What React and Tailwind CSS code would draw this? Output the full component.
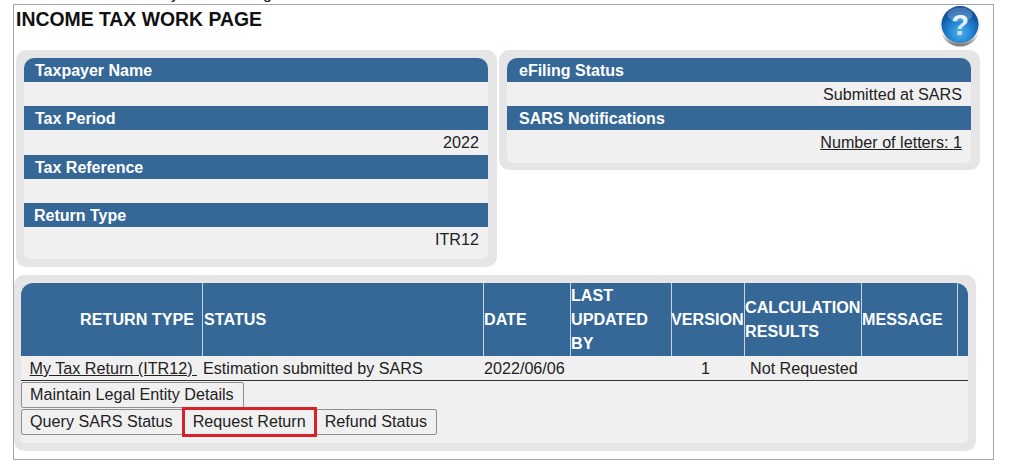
import React from 'react';

const font = 'font-["Liberation_Sans",Arial,sans-serif]';

const Field = ({ label, value, first, labelPad = 'pl-[11px]', h = 'h-[24px]' }) => (
  <>
    <div className={`h-[24px] bg-[#356897] text-white font-bold text-[16px] leading-[25px] ${labelPad} ${first ? 'rounded-t-[10px]' : ''}`}>
      {label}
    </div>
    <div className={`${h} text-right pr-[9px] text-[16.15px] leading-[24px] text-[#222]`}>{value}</div>
  </>
);

const HelpIcon = () => (
  <svg width="42" height="42" viewBox="0 0 42 42" className="block">
    <defs>
      <radialGradient id="ball" cx="50%" cy="72%" r="62%">
        <stop offset="0%" stopColor="#4db4ee" />
        <stop offset="55%" stopColor="#1f7fce" />
        <stop offset="100%" stopColor="#0c4f9c" />
      </radialGradient>
      <linearGradient id="rim" x1="0" y1="0" x2="0" y2="1">
        <stop offset="0%" stopColor="#d9dde2" />
        <stop offset="70%" stopColor="#f2f2f2" />
        <stop offset="100%" stopColor="#6e6e6e" />
      </linearGradient>
      <linearGradient id="mark" x1="0" y1="0" x2="0" y2="1">
        <stop offset="0%" stopColor="#ffffff" />
        <stop offset="100%" stopColor="#b9d9f2" />
      </linearGradient>
    </defs>
    <circle cx="21" cy="21.5" r="20" fill="url(#rim)" />
    <circle cx="21" cy="19.5" r="18.5" fill="url(#ball)" />
    <ellipse cx="21" cy="9.5" rx="12.5" ry="7" fill="#ffffff" opacity="0.22" />
    <text x="21" y="30" textAnchor="middle" fontSize="29" fontWeight="700" fill="url(#mark)" fontFamily="Liberation Sans, Arial, sans-serif">?</text>
  </svg>
);

const columns = [
  { label: 'RETURN TYPE', w: 'w-[182px]', cls: 'justify-end pr-[8px]' },
  { label: 'STATUS', w: 'w-[281px]', cls: 'pl-[1px]' },
  { label: 'DATE', w: 'w-[87px]', cls: '' },
  { label: <>LAST<br />UPDATED<br />BY</>, w: 'w-[101px]', cls: '' },
  { label: 'VERSION', w: 'w-[73px]', cls: 'overflow-visible' },
  { label: <>CALCULATION<br />RESULTS</>, w: 'w-[117px]', cls: '' },
  { label: 'MESSAGE', w: 'w-[96px]', cls: '' },
  { label: '', w: 'w-[10px]', cls: '' },
];

const rowCells = [
  { text: <a className="underline">My Tax Return (ITR12)&nbsp;</a>, w: 'w-[182px]', cls: 'text-right pr-[6px]' },
  { text: 'Estimation submitted by SARS', w: 'w-[281px]', cls: '' },
  { text: '2022/06/06', w: 'w-[87px]', cls: '' },
  { text: '', w: 'w-[101px]', cls: '' },
  { text: '1', w: 'w-[73px]', cls: 'text-center pr-[6px]' },
  { text: 'Not Requested', w: 'w-[117px]', cls: 'pl-[5px]' },
  { text: '', w: 'w-[96px]', cls: '' },
  { text: '', w: 'w-[10px]', cls: '' },
];

const Btn = ({ children, className = 'pl-[8px] pr-[9px]' }) => (
  <button className={`h-[26px] pb-[2px] bg-[#f0f0f0] border border-[#8f8f8f] rounded-[2px] text-[16.15px] leading-[22px] text-[#222] whitespace-nowrap ${className}`}>
    {children}
  </button>
);

export default function App() {
  return (
    <div className={`w-[1024px] h-[474px] bg-white overflow-hidden relative pt-[4px] pl-[13px] ${font}`}>
      {/* tail ends of the line cut off above the page */}
      <div className="absolute top-0 left-0 h-[3px] overflow-hidden text-[16px] leading-[16px] text-[#111]">
        <div className="mt-[-14px] flex pl-[171px]">
          <span>y</span>
          <span className="ml-[84px]">g</span>
        </div>
      </div>

      <div className="w-[981px] h-[456px] border border-[#a6a6a6] pl-[2px]">
        {/* Title row */}
        <div className="h-[45px] flex items-start justify-between pr-[12px]">
          <h1 className="text-[19.4px] leading-[29px] font-bold text-[#111]">INCOME TAX WORK PAGE</h1>
          <HelpIcon />
        </div>

        {/* Info panels */}
        <div className="flex items-start gap-[2px]">
          <div className="w-[481px] bg-[#e5e5e5] rounded-[10px] pl-[8px] pr-[9px] py-[8px]">
            <div className="bg-[#f0f0f0] rounded-b-[6px] rounded-t-[10px] h-[201px]">
              <Field first label="Taxpayer Name" value="" />
              <Field label="Tax Period" value="2022" h="h-[25px]" />
              <Field label="Tax Reference" value="" />
              <Field label="Return Type" value="ITR12" labelPad="pl-[10px]" />
            </div>
          </div>
          <div className="w-[481px] bg-[#e5e5e5] rounded-[10px] pl-[8px] pr-[9px] pt-[8px] h-[120px]">
            <div className="bg-[#f0f0f0] rounded-b-[6px] rounded-t-[10px] h-[105px]">
              <Field first label="eFiling Status" value="Submitted at SARS" labelPad="pl-[12px]" />
              <Field label="SARS Notifications" value={<a className="underline">Number of letters: 1</a>} labelPad="pl-[12px]" />
            </div>
          </div>
        </div>

        {/* Returns table */}
        <div className="mt-[8px] ml-[-2px] w-[962px] h-[176px] bg-[#e5e5e5] rounded-[10px] pl-[7px] pr-[8px] py-[8px]">
          <div className="bg-[#f0f0f0] h-[160px] rounded-t-[12px] rounded-b-[4px]">
            <div className="flex h-[73px] rounded-t-[12px] overflow-hidden bg-[#356897] text-white font-bold text-[16.15px] leading-[24px]">
              {columns.map((c, i) => (
                <div key={i} className={`${c.w} ${c.cls} pb-[2px] shrink-0 flex items-center whitespace-nowrap ${i < 7 ? 'border-r border-[#c9d6e2]' : ''}`}>
                  <div className={c.label === 'VERSION' ? 'ml-[-1px]' : ''}>{c.label}</div>
                </div>
              ))}
            </div>
            <div className="flex h-[25px] border-b border-[#333] text-[16.15px] leading-[24px] text-[#222]">
              {rowCells.map((c, i) => (
                <div key={i} className={`${c.w} ${c.cls} shrink-0 whitespace-nowrap`}>{c.text}</div>
              ))}
            </div>
            <div className="flex flex-col items-start pt-[1px] gap-[1px]">
              <Btn>Maintain Legal Entity Details</Btn>
              <div className="flex items-center">
                <Btn>Query SARS Status</Btn>
                <Btn className="px-[8px] ml-[1px] relative z-10 outline outline-[3px] outline-[#d9212c] -outline-offset-1 rounded-none">Request Return</Btn>
                <Btn className="pl-[8px] pr-[9px] ml-[1px]">Refund Status</Btn>
              </div>
            </div>
          </div>
        </div>
      </div>
    </div>
  );
}
